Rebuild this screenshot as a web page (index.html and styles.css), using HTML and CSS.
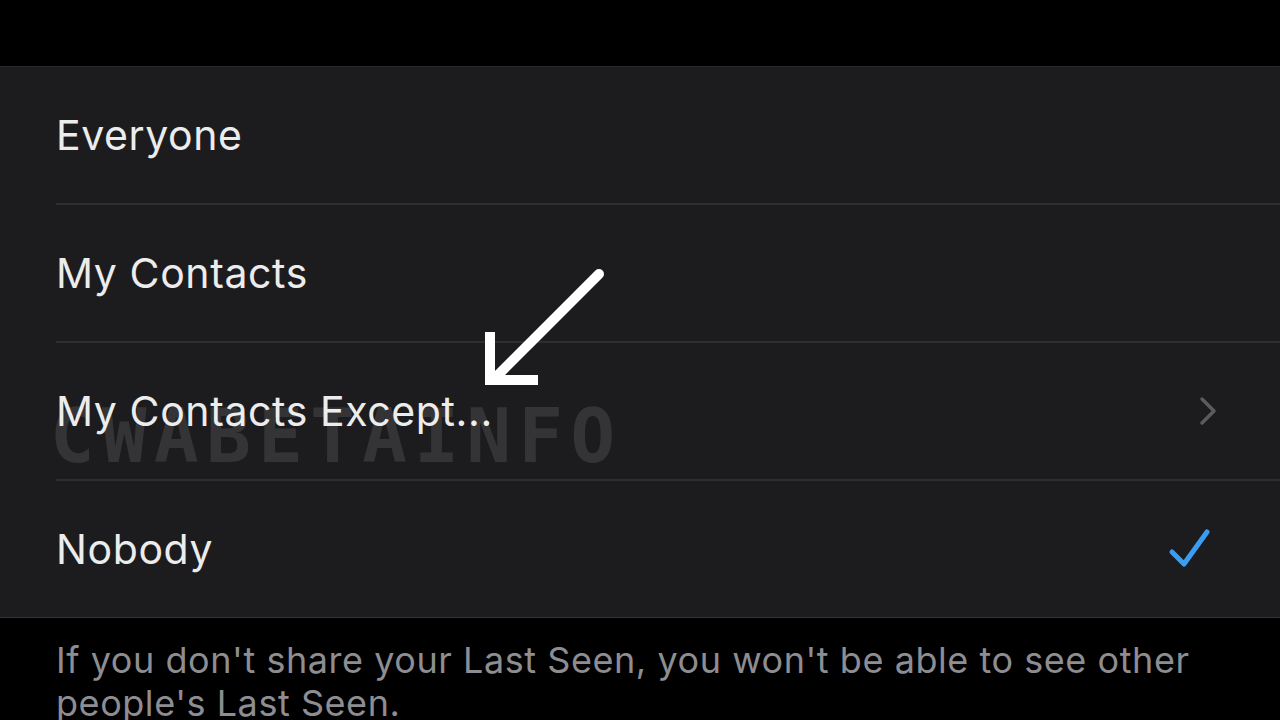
FILE: index.html
```html
<!DOCTYPE html>
<html lang="en">

<head>
    <meta charset="UTF-8">
    <meta name="viewport" content="width=device-width, initial-scale=1.0">
    <title>Last Seen</title>
    <link rel="stylesheet" href="styles.css">
</head>

<body>
    <div class="topbar"></div>
    <main>
        <ul class="options">
            <li class="option"><span class="label">Everyone</span></li>
            <li class="option"><span class="label">My Contacts</span></li>
            <li class="option">
                <span class="label">My Contacts Except...</span>
                <svg class="chevron" width="20" height="30" viewBox="0 0 20 30">
                    <path d="M4 3 L16 15 L4 27" fill="none" stroke="#5b5b5f" stroke-width="3.5" stroke-linecap="round" stroke-linejoin="round" />
                </svg>
            </li>
            <li class="option last">
                <span class="label">Nobody</span>
                <svg class="check" width="44" height="42" viewBox="0 0 44 42">
                    <path d="M4 24 L16 36 L39 4" fill="none" stroke="#3b9df1" stroke-width="5" stroke-linecap="round" stroke-linejoin="round" />
                </svg>
            </li>
        </ul>
        <p class="note">If you don't share your Last Seen, you won't be able to see other people's Last Seen.</p>

        <div class="watermark">CWABETAINFO</div>
        <svg class="arrow" width="140" height="140" viewBox="0 0 140 140">
            <path d="M117 8 L12 113" fill="none" stroke="#fff" stroke-width="10" stroke-linecap="round" />
            <path d="M8 66 L8 114 L56 114" fill="none" stroke="#fff" stroke-width="10" stroke-linejoin="miter" />
        </svg>
    </main>
</body>

</html>
```

FILE: styles.css
```css
body {
    margin: 0;
    background-color: #000;
    font-family: Inter, "Noto Sans", sans-serif;
    color: #ececec;
    overflow: hidden;
}

.topbar {
    height: 66px;
}

main {
    position: relative;
}

.options {
    list-style: none;
    margin: 0;
    padding: 0 0 0 56px;
    background-color: #1c1c1e;
    border-top: 1px solid #2a2a2c;
    border-bottom: 1px solid #333336;
}

.option {
    display: flex;
    align-items: center;
    justify-content: space-between;
    height: 136px;
    padding-right: 60px;
    border-bottom: 2px solid #2e2e31;
}

.option.last {
    border-bottom: 0;
}

.label {
    font-size: 41px;
    letter-spacing: 0.6px;
}

.chevron {
    margin-right: 2px;
}

.check {
    margin-right: 8px;
}

.note {
    margin: 0;
    padding: 21px 56px 0 56px;
    font-size: 36px;
    line-height: 43px;
    color: #8d8d92;
    letter-spacing: 0.55px;
}

.watermark {
    position: absolute;
    left: 50px;
    top: 327px;
    font-family: "DejaVu Sans Mono", monospace;
    font-weight: bold;
    font-size: 74px;
    letter-spacing: 7.5px;
    color: rgba(255, 255, 255, 0.11);
    pointer-events: none;
}

.arrow {
    position: absolute;
    left: 482px;
    top: 200px;
}
```
